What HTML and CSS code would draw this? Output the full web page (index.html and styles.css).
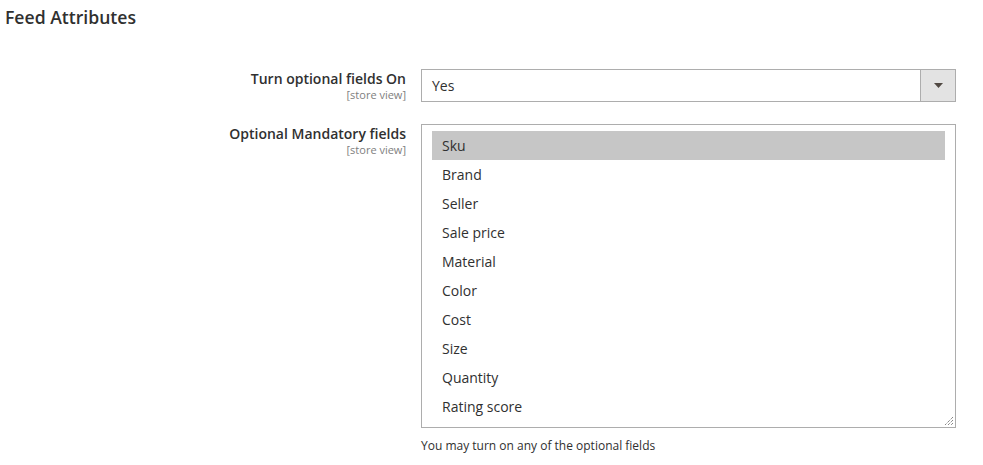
FILE: index.html
```html
<!DOCTYPE html>
<html>
<head>
<meta charset="utf-8">
<link rel="stylesheet" href="styles.css">
</head>
<body>
<div class="page">
  <h2 class="section-title">Feed Attributes</h2>
  <div class="fields">
    <div class="row">
      <div class="label">
        <span class="label-text">Turn optional fields On</span>
        <span class="scope">[store view]</span>
      </div>
      <div class="control">
        <div class="select">
          <span class="select-value">Yes</span>
          <span class="select-btn"><svg width="9" height="5" viewBox="0 0 9 5"><path d="M0 0H9L4.5 5Z" fill="#514943"/></svg></span>
        </div>
      </div>
    </div>
    <div class="row row-multi">
      <div class="label">
        <span class="label-text">Optional Mandatory fields</span>
        <span class="scope">[store view]</span>
      </div>
      <div class="control">
        <div class="multiselect">
          <div class="option selected">Sku</div>
          <div class="option">Brand</div>
          <div class="option">Seller</div>
          <div class="option">Sale price</div>
          <div class="option">Material</div>
          <div class="option">Color</div>
          <div class="option">Cost</div>
          <div class="option">Size</div>
          <div class="option">Quantity</div>
          <div class="option">Rating score</div>
          <svg class="grip" width="10" height="10" viewBox="0 0 10 10"><path d="M9 1L1 9M9 4L4 9M9 7L7 9" stroke="#555" stroke-width="1" stroke-dasharray="1 1"/></svg>
        </div>
        <p class="note">You may turn on any of the optional fields</p>
      </div>
    </div>
  </div>
</div>
</body>
</html>
```
FILE: styles.css
```css
* { box-sizing: border-box; }
html, body { margin: 0; padding: 0; background: #fff; }
body {
  font-family: "Open Sans", "Liberation Sans", sans-serif;
  color: #303030;
  font-size: 14px;
}
.page { padding: 0 0 0 5px; }
.section-title {
  margin: 0;
  padding-top: 5px;
  font-size: 17.6px;
  font-weight: 600;
  line-height: 24px;
  color: #303030;
}
.fields { padding-top: 40px; }
.row { display: flex; gap: 15px; }
.row-multi { margin-top: 22px; }
.label {
  width: 401px;
  display: flex;
  flex-direction: column;
  align-items: flex-end;
}
.label-text {
  font-weight: 600;
  font-size: 14px;
  line-height: 19px;
}
.scope {
  font-size: 11px;
  color: #808080;
  line-height: 13px;
}
.control { width: 535px; }
.select {
  height: 33px;
  border: 1px solid #adadad;
  display: flex;
  align-items: center;
}
.select-value { flex: 1; padding-left: 10px; line-height: 19px; }
.select-btn {
  width: 35px;
  height: 100%;
  background: #e3e3e3;
  border-left: 1px solid #adadad;
  display: flex;
  align-items: center;
  justify-content: center;
}
.select-btn svg { width: 9px; height: 5px; }
.multiselect {
  position: relative;
  height: 304px;
  border: 1px solid #adadad;
  padding: 6px 10px;
}
.option {
  height: 29px;
  line-height: 29px;
  padding-left: 10px;
  color: #303030;
}
.option.selected { background: #c6c6c6; }
.grip { position: absolute; right: 1px; bottom: 1px; }
.note {
  margin: 9px 0 0;
  font-size: 12px;
  line-height: 17px;
  color: #303030;
}
```
